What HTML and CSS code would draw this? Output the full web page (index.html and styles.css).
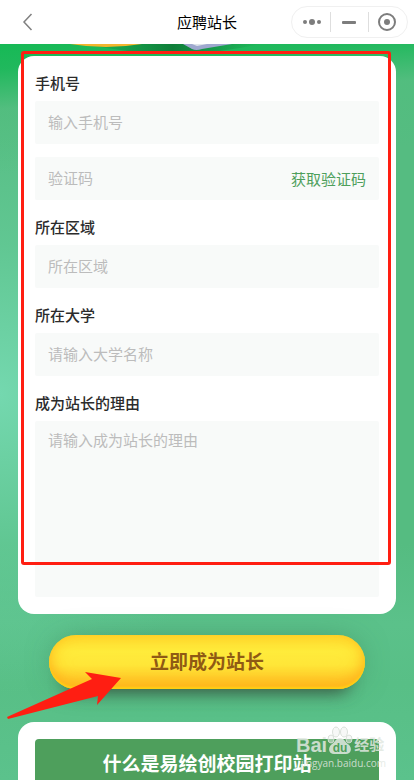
FILE: index.html
```html
<!DOCTYPE html>
<html lang="zh-CN">
<head>
  <meta charset="UTF-8" />
  <meta name="viewport" content="width=device-width, initial-scale=1.0">
  <title>应聘站长</title>
  <link rel="stylesheet" href="styles.css">
</head>
<body>

  <header class="navbar">
    <button class="back" type="button" aria-label="返回">
      <svg width="12" height="20" viewBox="0 0 12 20"><path d="M9.500 2 L2 10 L9.500 18" /></svg>
    </button>
    <h1>应聘站长</h1>
    <div class="capsule">
      <button type="button" aria-label="更多">
        <svg width="20" height="20" viewBox="0 0 20 20">
          <circle cx="3" cy="10" r="2" /><circle cx="10" cy="10" r="3" /><circle cx="17" cy="10" r="2" />
        </svg>
      </button>
      <button type="button" aria-label="最小化">
        <svg width="20" height="20" viewBox="0 0 20 20"><rect x="3" y="9" width="14" height="3" rx="1" /></svg>
      </button>
      <button type="button" aria-label="关闭">
        <svg width="20" height="20" viewBox="0 0 20 20">
          <circle class="ring" cx="10" cy="10" r="8" /><circle cx="10" cy="10" r="3" />
        </svg>
      </button>
    </div>
  </header>

  <main class="page">
    <div class="hero">
      <svg width="260" height="12" viewBox="0 0 260 12">
        <defs>
          <linearGradient id="shade" x1="0" x2="1" y1="0" y2="0">
            <stop offset="0" stop-color="#0a7030" stop-opacity="0" />
            <stop offset="0.5" stop-color="#0a6a2e" stop-opacity="0.75" />
            <stop offset="1" stop-color="#0a7030" stop-opacity="0" />
          </linearGradient>
        </defs>
        <path d="M85 0 H260 Q225 8 180 10 Q130 10 85 0 Z" fill="url(#shade)" />
        <path d="M70 0 Q106 6 142 0 Z" fill="#f3b62d" />
        <path d="M183 0 L192 5 Q196 7 202 5 L232 0 Z" fill="#9fa8cf" />
        <path d="M192 0 L197 2 L207 0 Z" fill="#dfe5ea" />
      </svg>
    </div>

    <form class="form">
      <div class="card">
        <label for="phone">手机号</label>
        <input id="phone" type="tel" placeholder="输入手机号">
        <div class="code">
          <input id="code" type="text" placeholder="验证码" aria-label="验证码">
          <button type="button">获取验证码</button>
        </div>

        <label for="area">所在区域</label>
        <input id="area" type="text" placeholder="所在区域">

        <label for="school">所在大学</label>
        <input id="school" type="text" placeholder="请输入大学名称">

        <label for="reason">成为站长的理由</label>
        <textarea id="reason" placeholder="请输入成为站长的理由"></textarea>
      </div>

      <button class="submit" type="submit">立即成为站长</button>
    </form>

    <section class="card intro">
      <h2>什么是易绘创校园打印站</h2>
    </section>
  </main>

  <div class="frame"></div>
  <svg class="arrow" width="116" height="50" viewBox="0 0 116 50">
    <path d="M0 47 L85 9 L78 2 L114 8 L90 35 L91 26 L1 49 Z" />
  </svg>

  <div class="watermark">
    <div class="brand">
      <span>Bai</span>
      <span class="paw">
        <svg width="26" height="29" viewBox="0 0 26 29">
          <ellipse class="toe" cx="4" cy="13" rx="3" ry="4" />
          <ellipse class="toe" cx="9" cy="6" rx="3.500" ry="5" />
          <ellipse class="toe" cx="17" cy="6" rx="3.500" ry="5" />
          <ellipse class="toe" cx="22" cy="13" rx="3" ry="4" />
          <path d="M13 12 C17 12 18 16 21 18 C26 22 24 28 19 28 H7 C2 28 0 22 5 18 C8 16 9 12 13 12 Z" />
        </svg>
        <span class="du">du</span>
      </span>
      <span class="cn">经验</span>
    </div>
    <div class="site">jingyan.baidu.com</div>
  </div>

</body>
</html>
```

FILE: styles.css
```css
:root {
  --text: #2b2b2b;
  --field: #f8faf9;
  --hint: #bcbcbc;
  --green: #4e9f5c;
  --red: #ff1e12;
}

* {
  box-sizing: border-box;
}

body {
  font-family: "Noto Sans CJK SC", sans-serif;
  color: var(--text);
  margin: 0;
  position: relative;
  height: 100vh;
  display: flex;
  flex-direction: column;
  overflow: hidden;
}

button,
input,
textarea {
  font-family: inherit;
  border: none;
  margin: 0;
}

button {
  background: none;
  padding: 0;
  cursor: pointer;
}

/* top bar */
.navbar {
  flex: none;
  display: grid;
  grid-template-columns: 1fr auto 1fr;
  align-items: center;
  height: 44px;
  padding: 0 6px 0 22px;
  background: #fff;
}

.navbar h1 {
  margin: 0;
  padding-right: 16px;
  font-size: 15px;
  font-weight: 400;
  line-height: 20px;
  color: #000;
}

.back {
  display: flex;
  justify-self: start;
}

.back path {
  fill: none;
  stroke: #808080;
  stroke-width: 1.5;
}

.capsule {
  justify-self: end;
  display: flex;
  align-items: center;
  width: 117px;
  height: 32px;
  padding: 0 2px;
  border: 1px solid #f0f0f0;
  border-radius: 16px;
}

.capsule button {
  flex: 1;
  display: flex;
  justify-content: center;
}

.capsule button + button {
  border-left: 1px solid #dedede;
}

.capsule svg {
  fill: #7d7d7d;
}

.capsule .ring {
  fill: none;
  stroke: #7d7d7d;
  stroke-width: 2;
}

/* page */
.page {
  flex: 1;
  min-height: 0;
  overflow: hidden;
  padding: 0 18px;
  background:
    linear-gradient(176deg, #16b955 0, rgba(27, 184, 89, 0.9) 25px, rgba(80, 190, 125, 0.6) 65px, rgba(90, 192, 135, 0) 130px),
    radial-gradient(ellipse 260px 300px at 0 350px, #74d8af, rgba(104, 206, 158, 0.6) 50%, rgba(90, 192, 135, 0)),
    linear-gradient(#55bc81 0, #55bc81 500px, #5bc18a 580px, #58bf86 640px, #5bc28c 100%);
}

.hero {
  height: 12px;
  margin: 0 -18px;
}

.hero svg {
  display: block;
}

.card {
  background: #fff;
  border-radius: 16px;
  padding: 0 17px 17px;
}

.form {
  display: flex;
  flex-direction: column;
}

.card label {
  display: block;
  padding: 17px 0 8px;
  font-size: 15px;
  font-weight: 500;
  line-height: 20px;
}

.card input,
.card textarea {
  display: block;
  width: 100%;
  height: 43px;
  padding: 0 13px 3px;
  border-radius: 2px;
  background: var(--field);
  color: var(--text);
  font-size: 15px;
  line-height: 20px;
}

.card textarea {
  height: 176px;
  padding: 9px 13px;
  resize: none;
}

.card ::placeholder {
  color: var(--hint);
  opacity: 1;
}

.code {
  display: flex;
  margin-top: 13px;
  padding-right: 13px;
  border-radius: 2px;
  background: var(--field);
}

.code input {
  flex: 1;
  min-width: 0;
}

.code button {
  flex: none;
  font-size: 15px;
  color: var(--green);
}

.submit {
  height: 54px;
  margin: 21px 31px 33px;
  padding-bottom: 4px;
  border-radius: 27px;
  background: linear-gradient(#ffe034 0, #ffec3c 30%, #ffe638 55%, #ffcf2c 80%, #ffc41e 100%);
  box-shadow:
    inset 0 -2px 2px #ffd014,
    inset 0 -6px 12px rgba(255, 172, 30, 0.7),
    inset 0 0 18px rgba(255, 186, 20, 0.6),
    0 20px 16px -16px rgba(55, 75, 60, 0.8),
    0 0 30px -8px rgba(50, 110, 75, 0.6);
  font-size: 19px;
  font-weight: 700;
  color: #8f5a14;
}

.intro {
  padding-top: 17px;
}

.intro h2 {
  margin: 0;
  padding: 10px 0 14px;
  border-radius: 4px 4px 0 0;
  background: var(--green);
  color: #fff;
  font-size: 19px;
  line-height: 28px;
  text-align: center;
}

/* marks drawn over the page */
.frame {
  position: absolute;
  top: 51px;
  left: 21px;
  right: 23px;
  height: 514px;
  border: 3px solid var(--red);
  border-radius: 3px;
  pointer-events: none;
}

.arrow {
  position: absolute;
  top: 670px;
  left: 7px;
  fill: var(--red);
  pointer-events: none;
}

.watermark {
  position: absolute;
  top: 726px;
  right: 28px;
  width: 90px;
  color: rgba(225, 232, 225, 0.85);
  pointer-events: none;
}

.brand {
  display: flex;
  align-items: flex-end;
  height: 29px;
  font-family: "Liberation Sans", "Noto Sans CJK SC", sans-serif;
  font-size: 20px;
  font-weight: 700;
  line-height: 20px;
}

.paw {
  position: relative;
  display: flex;
}

.paw svg {
  fill: rgba(225, 232, 225, 0.85);
}

.paw .toe {
  fill: rgba(240, 242, 240, 0.5);
  stroke: rgba(215, 222, 215, 0.9);
}

.du {
  position: absolute;
  left: 0;
  right: 0;
  bottom: 0;
  text-align: center;
  font-size: 12px;
  line-height: 14px;
  color: var(--green);
}

.cn {
  padding-left: 1px;
  font-size: 15px;
}

.site {
  font-family: "Open Sans", sans-serif;
  font-size: 10px;
  line-height: 16px;
  text-align: right;
  white-space: nowrap;
}
```
